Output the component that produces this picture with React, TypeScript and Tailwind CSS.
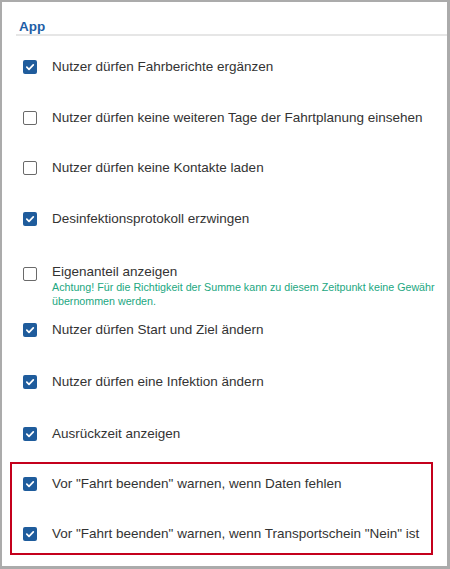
import React from "react";

function Box({ checked }: { checked: boolean }) {
  if (checked) {
    return (
      <span className="flex h-[14px] w-[14px] shrink-0 items-center justify-center rounded-[2px] bg-[#1f5c9c]">
        <svg width="10" height="10" viewBox="0 0 10 10" fill="none">
          <path d="M1.8 5.2 L4 7.3 L8.3 2.8" stroke="white" strokeWidth="1.7" strokeLinecap="round" strokeLinejoin="round" />
        </svg>
      </span>
    );
  }
  return <span className="block h-[14px] w-[14px] shrink-0 rounded-[2px] border-[1.5px] border-[#6a6a6a] bg-white" />;
}

function Row({ checked, label, h }: { checked: boolean; label: string; h: string }) {
  return (
    <div className={`flex items-center gap-[15px] ${h}`}>
      <Box checked={checked} />
      <span className="text-[13.5px] leading-[16px] text-[#333]">{label}</span>
    </div>
  );
}

export default function App() {
  return (
    <div
      className="box-border h-[569px] w-[450px] border-b-[3px] border-l-2 border-r-[3px] border-t-2 border-[#ababab] bg-white pl-[8px]"
      style={{ fontFamily: '"Liberation Sans", Arial, sans-serif' }}
    >
      <div className="ml-[6px] border-b-2 border-[#e6e6e6] pl-[3px] pt-[17px]">
        <div className="h-[15px] text-[13.5px] font-bold leading-[16px] text-[#1f5ea6]">App</div>
      </div>
      <div className="mt-[6px] flex flex-col pl-[13px]">
        <Row checked label="Nutzer dürfen Fahrberichte ergänzen" h="h-[50.5px]" />
        <Row checked={false} label="Nutzer dürfen keine weiteren Tage der Fahrtplanung einsehen" h="h-[50.5px]" />
        <Row checked={false} label="Nutzer dürfen keine Kontakte laden" h="h-[50.5px]" />
        <Row checked label="Desinfektionsprotokoll erzwingen" h="h-[50.5px]" />
        <div className="flex h-[60px] items-start gap-[15px] pt-[20px]">
          <span className="mt-[3px]">
            <Box checked={false} />
          </span>
          <div className="flex flex-col">
            <span className="text-[13.5px] leading-[16px] text-[#333]">Eigenanteil anzeigen</span>
            <span className="whitespace-nowrap text-[10.7px] leading-[14px] text-[#22a77f]">
              Achtung! Für die Richtigkeit der Summe kann zu diesem Zeitpunkt keine Gewähr
              <br />
              übernommen werden.
            </span>
          </div>
        </div>
        <Row checked label="Nutzer dürfen Start und Ziel ändern" h="h-[52px]" />
        <Row checked label="Nutzer dürfen eine Infektion ändern" h="h-[52px]" />
        <Row checked label="Ausrückzeit anzeigen" h="h-[52px]" />
      </div>
      <div className="mt-[2px] flex w-[423px] flex-col gap-[12px] border-2 border-[#c4001c] pl-[11px]">
        <Row checked label={'Vor "Fahrt beenden" warnen, wenn Daten fehlen'} h="h-[39px]" />
        <Row checked label={'Vor "Fahrt beenden" warnen, wenn Transportschein "Nein" ist'} h="h-[38px]" />
      </div>
    </div>
  );
}
